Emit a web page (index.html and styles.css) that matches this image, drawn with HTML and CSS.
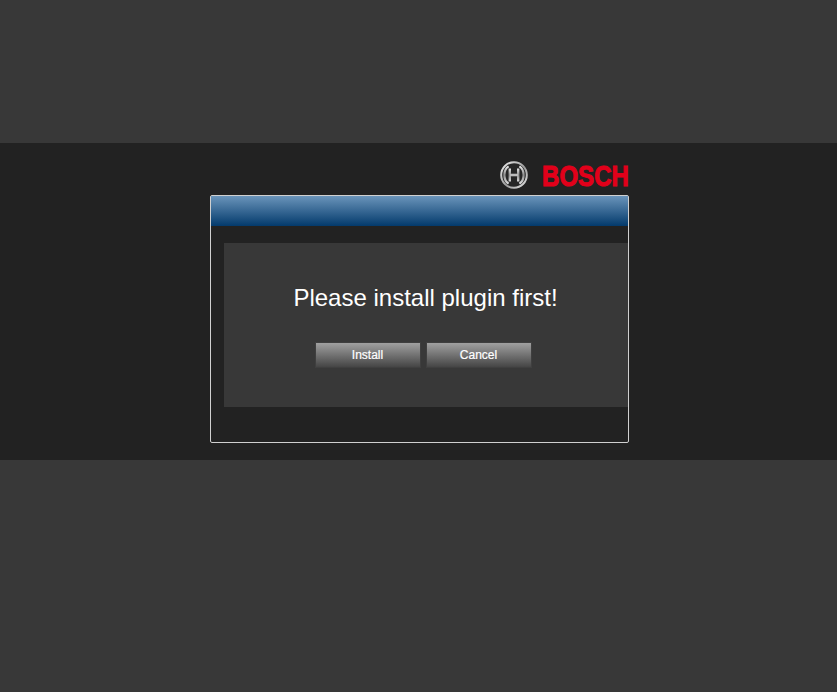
FILE: index.html
```html
<!DOCTYPE html>
<html lang="en">
<head>
<meta charset="utf-8">
<title>Install plugin</title>
<link rel="stylesheet" href="styles.css">
</head>
<body>
<main class="band">
  <div class="column">
    <header class="brand">
      <svg class="brand-mark" width="28" height="28" viewBox="0 0 28 28" aria-hidden="true">
        <defs>
          <linearGradient id="ring" x1="0" y1="0" x2="1" y2="1">
            <stop offset="0" stop-color="#f0f0f0"/>
            <stop offset="0.55" stop-color="#9a9a9a"/>
            <stop offset="1" stop-color="#e6e6e6"/>
          </linearGradient>
          <linearGradient id="bars" x1="0" y1="0" x2="0" y2="1">
            <stop offset="0" stop-color="#e8e8e8"/>
            <stop offset="0.5" stop-color="#8c8c8c"/>
            <stop offset="1" stop-color="#dcdcdc"/>
          </linearGradient>
        </defs>
        <circle cx="14" cy="14" r="12.8" fill="#262626" stroke="url(#ring)" stroke-width="2"/>
        <path d="M8.6 5.4C5.4 7.4 4.4 10.5 4.4 14s1 6.6 4.2 8.6" fill="none" stroke="url(#bars)" stroke-width="2.2"/>
        <path d="M19.4 5.4c3.2 2 4.2 5.1 4.2 8.6s-1 6.6-4.2 8.6" fill="none" stroke="url(#bars)" stroke-width="2.2"/>
        <path d="M9.8 7.5v13M18.2 7.5v13" fill="none" stroke="url(#bars)" stroke-width="2.4"/>
        <path d="M9.8 12.7h8.4v2.6H9.8z" fill="#bcbcbc"/>
      </svg>
      <span class="brand-name">BOSCH</span>
    </header>
    <section class="dialog">
      <div class="dialog-title"></div>
      <div class="dialog-panel">
        <p class="message">Please install plugin first!</p>
        <div class="actions">
          <button class="btn" type="button">Install</button>
          <button class="btn" type="button">Cancel</button>
        </div>
      </div>
    </section>
  </div>
</main>
</body>
</html>
```

FILE: styles.css
```css
html, body {
  margin: 0;
  height: 100%;
}

body {
  background: #383838;
  font-family: "Liberation Sans", Arial, sans-serif;
  padding-top: 143px;
  box-sizing: border-box;
  overflow: hidden;
}

.band {
  height: 317px;
  background: #222222;
  display: flex;
  justify-content: center;
}

.column {
  width: 419px;
  margin-left: 1px;
  padding-top: 18px;
  box-sizing: border-box;
}

.brand {
  height: 34px;
  padding-right: 1px;
  display: flex;
  justify-content: flex-end;
  align-items: flex-start;
  gap: 14px;
}

.brand-mark {
  flex: none;
}

.brand-name {
  display: block;
  width: 86px;
  margin-top: 1px;
  color: #e2001a;
  font-size: 29px;
  line-height: 28px;
  font-weight: 700;
  white-space: nowrap;
  transform: scaleX(0.83);
  transform-origin: left center;
  -webkit-text-stroke: 1px #e2001a;
}

.dialog {
  height: 248px;
  border: 1px solid #d0d0d0;
  border-radius: 2px;
  box-sizing: border-box;
  background: #222222;
}

.dialog-title {
  height: 30px;
  background: linear-gradient(#6a94ba, #033a6c);
}

.dialog-panel {
  height: 164px;
  margin: 17px 0 0 13px;
  background: #383838;
  display: flex;
  flex-direction: column;
  align-items: center;
}

.message {
  margin: 41px 0 0;
  color: #ffffff;
  font-size: 24px;
  line-height: 28px;
  white-space: nowrap;
}

.actions {
  display: flex;
  gap: 5px;
  margin: 30px 5px 0 0;
}

.btn {
  width: 106px;
  height: 26px;
  padding: 0;
  border: 1px solid #3f3f3f;
  background: linear-gradient(#a0a0a0, #454545);
  color: #ffffff;
  font-family: "Liberation Sans", Arial, sans-serif;
  font-size: 12px;
  -webkit-text-stroke: 0.2px #ffffff;
}
```
